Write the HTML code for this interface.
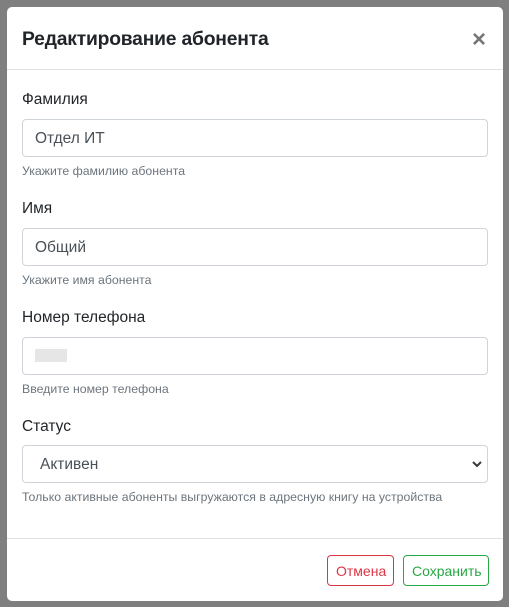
<!DOCTYPE html><html><head><meta charset="utf-8"><style>
body{margin:0;width:509px;height:607px;background:#7f7f7f;font-family:"Liberation Sans","DejaVu Sans",sans-serif;position:relative;overflow:hidden}
.m{position:absolute;left:7px;top:7px;width:496px;height:594px;background:#fff;border-radius:5px}
.h{height:62px;border-bottom:1px solid #dee2e6;position:relative}
.h h5{margin:0;position:absolute;left:15px;top:22px;font-size:19.3px;font-weight:bold;color:#212529;letter-spacing:-0.2px}
.x{position:absolute;right:17px;top:19px;font-size:24px;font-weight:bold;color:#777}
.lbl{position:absolute;left:15px;font-size:15.5px;color:#212529}
.in{position:absolute;left:15px;width:466px;height:38px;border:1px solid #ced4da;border-radius:4px;font-size:15.5px;color:#495057;box-sizing:border-box;padding:10px 12px}
.hp{position:absolute;left:15px;font-size:12.3px;color:#6c757d}
.f{position:absolute;left:0;right:0;top:531px;border-top:1px solid #dee2e6}
.b{position:absolute;top:548px;height:31px;box-sizing:border-box;border:1px solid;border-radius:4px;font-size:14px;padding:7px 8px}
</style></head><body>
<div class="m">
<div class="h"><h5>Редактирование абонента</h5><div class="x">×</div></div>
<div class="lbl" style="top:84px">Фамилия</div>
<div class="in" style="top:112px">Отдел ИТ</div>
<div class="hp" style="top:157px">Укажите фамилию абонента</div>
<div class="lbl" style="top:193px">Имя</div>
<div class="in" style="top:221px">Общий</div>
<div class="hp" style="top:266px">Укажите имя абонента</div>
<div class="lbl" style="top:302px">Номер телефона</div>
<div class="in" style="top:330px"><div style="width:32px;height:13px;background:#e6e6e6;margin-top:1px"></div></div>
<div class="hp" style="top:375px">Введите номер телефона</div>
<div class="lbl" style="top:411px">Статус</div>
<div class="in" style="top:438px;padding-left:17px">Активен<svg style="position:absolute;right:5px;top:15px" width="10" height="7" viewBox="0 0 10 7"><path d="M1 1l4 4 4-4" fill="none" stroke="#343a40" stroke-width="2"/></svg></div>
<div class="hp" style="top:483px">Только активные абоненты выгружаются в адресную книгу на устройства</div>
<div class="f"></div>
<div class="b" style="left:320px;width:67px;color:#dc3545;border-color:#dc3545">Отмена</div>
<div class="b" style="left:396px;width:86px;color:#28a745;border-color:#28a745">Сохранить</div>
</div>
</body></html>
